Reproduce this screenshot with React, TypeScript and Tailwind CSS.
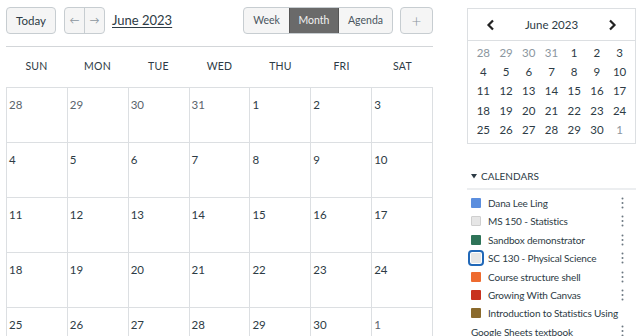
import React from 'react';

const weeks = [
  [28, 29, 30, 31, 1, 2, 3],
  [4, 5, 6, 7, 8, 9, 10],
  [11, 12, 13, 14, 15, 16, 17],
  [18, 19, 20, 21, 22, 23, 24],
  [25, 26, 27, 28, 29, 30, 1],
];
const days = ['Sun', 'Mon', 'Tue', 'Wed', 'Thu', 'Fri', 'Sat'];

const calendars = [
  { name: 'Dana Lee Ling', color: 'bg-[#5b8ede]' },
  { name: 'MS 150 - Statistics', color: 'bg-[#e6e6e6] border border-[#cfcfcf]' },
  { name: 'Sandbox demonstrator', color: 'bg-[#2e7358]' },
  { name: 'SC 130 - Physical Science', color: 'bg-[#e6e6e6] outline-2 outline-[#2168b8] outline-offset-1' },
  { name: 'Course structure shell', color: 'bg-[#ee6b2f]' },
  { name: 'Growing With Canvas', color: 'bg-[#c8321f]' },
  { name: 'Introduction to Statistics Using Google Sheets textbook', color: 'bg-[#8a6a2c]' },
];

function Kebab() {
  return (
    <svg width="3" height="12" viewBox="0 0 3 12" className="shrink-0">
      <circle cx="1.5" cy="1.5" r="1" fill="#6b7780" />
      <circle cx="1.5" cy="6" r="1" fill="#6b7780" />
      <circle cx="1.5" cy="10.5" r="1" fill="#6b7780" />
    </svg>
  );
}

function Chevron({ dir }: { dir: 'l' | 'r' }) {
  return (
    <svg width="10" height="12" viewBox="0 0 10 12">
      <path d={dir === 'l' ? 'M7 1.5 L2.5 6 L7 10.5' : 'M3 1.5 L7.5 6 L3 10.5'} fill="none" stroke="#222" strokeWidth="2.2" />
    </svg>
  );
}

export default function App() {
  return (
    <div className="w-[640px] h-[336px] overflow-hidden bg-white flex text-[#2d3b45]" style={{ fontFamily: 'Lato, "Open Sans", sans-serif' }}>
      {/* main calendar */}
      <div className="ml-[6px] w-[427px] shrink-0">
        <div className="flex items-center pt-[7px] h-[34px]">
          <button className="h-[27px] w-[50px] rounded-[4px] border border-[#c7cdd1] bg-[#f5f5f5] text-[11.5px]">Today</button>
          <div className="ml-[8px] flex h-[27px] w-[41px] rounded-[4px] border border-[#c7cdd1] bg-[#f5f5f5] text-[10px] text-[#8b969e]">
            <span className="flex-1 flex items-center justify-center border-r border-[#c7cdd1]">←</span>
            <span className="flex-1 flex items-center justify-center">→</span>
          </div>
          <span className="ml-[7px] text-[13px] underline underline-offset-2">June 2023</span>
          <div className="ml-auto flex h-[27px] rounded-[4px] border border-[#c7cdd1] bg-[#f5f5f5] text-[10.5px] overflow-hidden">
            <span className="w-[45px] flex items-center justify-center text-[#4a5560]">Week</span>
            <span className="w-[50px] flex items-center justify-center bg-[#6a6a6a] text-[#f2f2f2] border-x border-[#555]">Month</span>
            <span className="w-[53px] flex items-center justify-center text-[#4a5560]">Agenda</span>
          </div>
          <button className="ml-[7px] h-[27px] w-[33px] rounded-[4px] border border-[#c7cdd1] bg-[#f5f5f5] text-[17px] font-light text-[#8b969e] leading-none">+</button>
        </div>
        <div className="mt-[12px] border-t border-[#d3d6d9]" />
        <div className="grid grid-cols-7 h-[40px] items-center">
          {days.map((d) => (
            <div key={d} className="text-center text-[10.5px] uppercase tracking-wide text-[#2d3b45]">{d}</div>
          ))}
        </div>
        <div className="border-l border-t border-[#dcdfe2]">
          {weeks.map((w, i) => (
            <div key={i} className="grid grid-cols-7">
              {w.map((n, j) => {
                const other = (i === 0 && n > 20) || (i === 4 && n < 7);
                return (
                  <div key={j} className="h-[55px] border-r border-b border-[#dcdfe2] px-[2px] pt-[3px]">
                    <span className={`text-[11.5px] ${other ? 'text-[#5a646c]' : 'text-[#2d3b45]'}`}>{n}</span>
                  </div>
                );
              })}
            </div>
          ))}
        </div>
      </div>

      {/* sidebar */}
      <div className="ml-[34px] w-[169px] shrink-0">
        <div className="mt-[8px] border border-[#dcdfe2] h-[136px]">
          <div className="h-[32px] border-b border-[#dcdfe2] flex items-center justify-between px-[18px]">
            <Chevron dir="l" />
            <span className="text-[11.5px] text-[#2d3b45]">June 2023</span>
            <Chevron dir="r" />
          </div>
          <div className="px-[4px] pt-[2px]">
            {weeks.map((w, i) => (
              <div key={i} className="grid grid-cols-7 h-[19.2px] items-center">
                {w.map((n, j) => {
                  const other = (i === 0 && n > 20) || (i === 4 && n < 7);
                  return (
                    <span key={j} className={`text-center text-[11.5px] ${other ? 'text-[#8b969e]' : 'text-[#2d3b45]'}`}>{n}</span>
                  );
                })}
              </div>
            ))}
          </div>
        </div>

        <div className="mt-[25px] flex items-center pl-[4px] h-[14px]">
          <svg width="6" height="5" viewBox="0 0 6 5"><path d="M0 0 H6 L3 4.5 Z" fill="#2d3b45" /></svg>
          <span className="ml-[4px] text-[10px] uppercase text-[#2d3b45]">Calendars</span>
        </div>
        <div className="mt-[5px] h-[2px] bg-[#eceef0]" />
        <div className="pt-[4px] text-[10px] tracking-[-0.15px] text-[#2d3b45]">
          {calendars.map((c, i) => (
            <div key={c.name} className="flex items-start pl-[4px] pr-[12px]">
              <p className="flex-1 leading-[18.4px]">
                <span className={`inline-block align-[-1px] w-[10px] h-[10px] rounded-[1px] mr-[7px] ${c.color}`} />
                {c.name}
              </p>
              <div className={i === 6 ? 'mt-[21px]' : 'mt-[3px]'}>
                <Kebab />
              </div>
            </div>
          ))}
        </div>
      </div>
    </div>
  );
}
